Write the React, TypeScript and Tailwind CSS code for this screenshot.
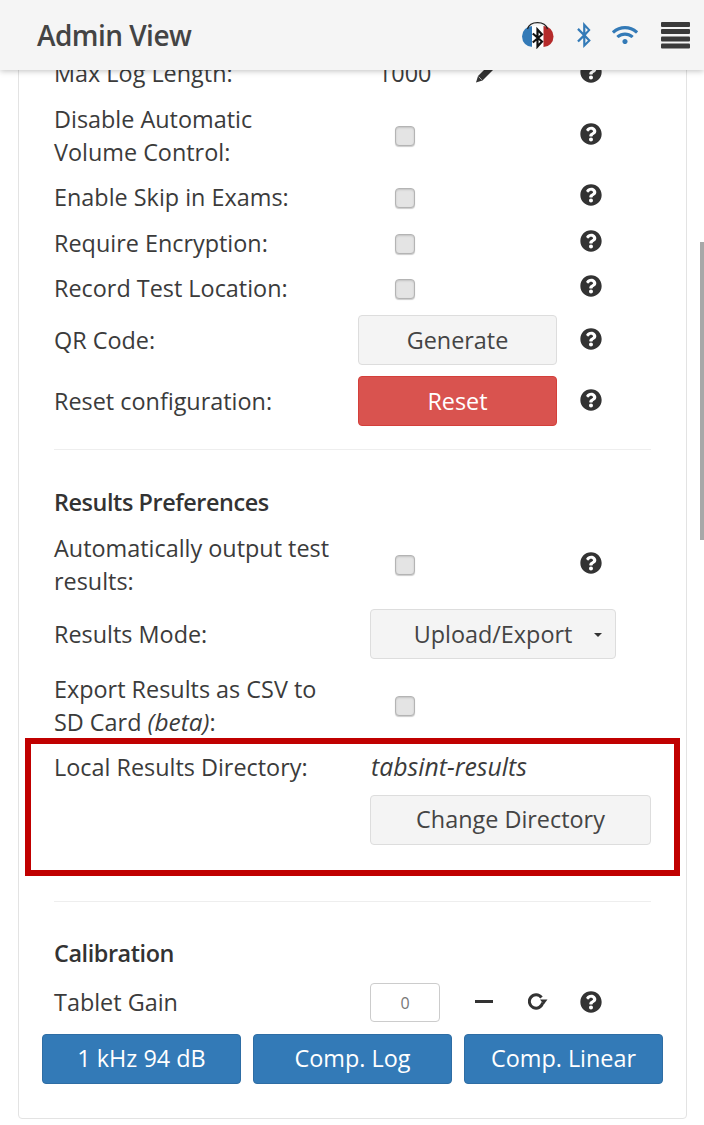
import React from "react";
import { FaQuestionCircle, FaBluetoothB, FaWifi } from "react-icons/fa";

const Help = ({ className = "" }: { className?: string }) => (
  <FaQuestionCircle className={`w-[22px] h-[22px] text-[#333333] shrink-0 ${className}`} />
);

const Check = () => (
  <div className="w-[70px] flex justify-center pt-[3px]">
    <input
      type="checkbox"
      className="appearance-none block w-[20px] h-[20px] rounded-[4px] bg-[#e4e4e4] border border-[#b4b4b4] shadow-[inset_0_1px_2px_rgba(0,0,0,0.15),0_1px_1px_rgba(0,0,0,0.2)]"
    />
  </div>
);

const CheckRow = ({
  label,
  className,
  help = true,
  two = false,
}: {
  label: React.ReactNode;
  className: string;
  help?: boolean;
  two?: boolean;
}) => (
  <div className={`flex items-center ${two ? "min-h-[67px]" : "min-h-[34px]"} ${className}`}>
    <div className={`w-[316px] pt-[1px] -mb-[1px] ${two ? "leading-[33px]" : "leading-[34px]"}`}>{label}</div>
    <div className="w-[210px]">
      <Check />
    </div>
    {help && <Help className="-mt-[2px]" />}
  </div>
);

const btn = "h-[50px] rounded-[4px] border flex items-center justify-center";
const def = "bg-[#f4f4f4] border-[#dddddd] text-[#444444]";
const blue = "flex-1 bg-[#337ab7] border-[#2e6da4] text-white";

const Logo = () => (
  <svg width="32" height="27" viewBox="0 0 32 27" className="shrink-0">
    <defs>
      <clipPath id="cloud">
        <path d="M10.5 4 A10.5 10.5 0 0 0 10.5 25 L21.5 25 A10 10.5 0 0 0 21.5 4 Z" />
      </clipPath>
    </defs>
    <g clipPath="url(#cloud)">
      <rect x="0" y="0" width="10" height="27" fill="#337ab7" />
      <rect x="10" y="0" width="11.5" height="27" fill="#ffffff" />
      <rect x="21.5" y="0" width="11" height="27" fill="#b52a2a" />
    </g>
    <path d="M5.5 7 C8 -1.5 23 -1.5 25.5 7" fill="none" stroke="#222222" strokeWidth="1.2" />
    <path d="M10.8 11.5 L20 19.5 L15.5 24.5 L15.5 7.5 L20 12.5 L10.8 20.5" fill="none" stroke="#111111" strokeWidth="2.2" />
  </svg>
);

const Bars = () => (
  <svg width="29" height="27" viewBox="0 0 29 27" className="shrink-0">
    <rect x="0" y="0" width="29" height="5" rx="1" fill="#3a3a3a" />
    <rect x="0" y="7" width="29" height="5" rx="1" fill="#3a3a3a" />
    <rect x="0" y="14.5" width="29" height="5" rx="1" fill="#3a3a3a" />
    <rect x="0" y="21.5" width="29" height="5" rx="1" fill="#3a3a3a" />
  </svg>
);

const Pencil = () => (
  <svg width="20" height="20" viewBox="0 0 20 20" className="shrink-0 -mt-[1px]">
    <path d="M1 19.5 L3 13 L14.5 1.5 L19 6 L7.5 17.5 Z" fill="#333333" />
    <path d="M3.6 13.6 L6.8 16.8" stroke="#ffffff" strokeWidth="0.6" />
  </svg>
);

const Refresh = () => (
  <svg width="20" height="18" viewBox="0 0 20 18" className="shrink-0 -mt-[2px]">
    <path d="M13.5 4.5 A6.7 6.7 0 1 0 14.7 9.5" fill="none" stroke="#333333" strokeWidth="3" />
    <path d="M12 6.5 L19.5 6.5 L15.8 11.5 Z" fill="#333333" />
  </svg>
);

export default function App() {
  return (
    <div
      className="w-[704px] h-[1125px] flex flex-col overflow-hidden bg-white text-[23.4px] text-[#3b3b3b] relative"
      style={{ fontFamily: '"Open Sans", sans-serif' }}
    >
      <header className="relative z-10 h-[70px] shrink-0 bg-[#f5f5f5] shadow-[0_1px_6px_rgba(0,0,0,0.25)] flex items-center pl-[37px] pr-[14px]">
        <div className="text-[28px] font-semibold text-[#444444] tracking-[-0.55px] flex-1">Admin View</div>
        <Logo />
        <FaBluetoothB className="w-[20px] h-[26px] text-[#337ab7] ml-[20px]" />
        <FaWifi className="w-[26px] h-[24px] text-[#337ab7] ml-[18px]" />
        <div className="ml-[23px]">
          <Bars />
        </div>
      </header>

      <div className="absolute right-0 top-[242px] w-[4.5px] h-[298px] bg-[#a8a8a8]" />

      <main className="flex-1 overflow-hidden">
        <div className="ml-[18px] w-[669px] -mt-[24px] h-[1073px] border border-[#e3e3e3] rounded-[4px] px-[35px] pt-[9px]">
          <div className="flex items-center h-[34px]">
            <div className="w-[324px] pt-[1px] -mb-[1px]">Max Log Length:</div>
            <div className="w-[97px] pt-[1px] -mb-[1px]">1000</div>
            <Pencil />
            <Help className="ml-[85px] -mt-[2px]" />
          </div>

          <CheckRow two className="mt-[11px]" label={<>Disable Automatic<br />Volume Control:</>} />
          <CheckRow className="mt-[11px]" label="Enable Skip in Exams:" />
          <CheckRow className="mt-[12px]" label="Require Encryption:" />
          <CheckRow className="mt-[11px]" label="Record Test Location:" />

          <div className="flex items-center mt-[11px]">
            <div className="w-[304px] pt-[1px] -mb-[1px]">QR Code:</div>
            <div className="w-[222px]">
              <button className={`${btn} ${def} w-[199px] pt-[2px]`}>Generate</button>
            </div>
            <Help className="-mt-[2px]" />
          </div>

          <div className="flex items-center mt-[11px]">
            <div className="w-[304px] pt-[1px] -mb-[1px]">Reset configuration:</div>
            <div className="w-[222px]">
              <button className={`${btn} w-[199px] bg-[#d9534f] border-[#d43f3a] text-white pt-[2px]`}>Reset</button>
            </div>
            <Help className="-mt-[2px]" />
          </div>

          <hr className="mt-[23px] border-t border-[#eeeeee]" />

          <h3 className="mt-[35px] font-semibold leading-[34px] tracking-[-0.42px] text-[#333333]">Results Preferences</h3>

          <CheckRow two className="mt-[11px]" label={<>Automatically output test<br />results:</>} />

          <div className="flex items-center mt-[12px]">
            <div className="w-[316px] pt-[1px] -mb-[1px]">Results Mode:</div>
            <button className={`${btn} ${def} w-[246px] relative pt-[2px]`}>
              Upload/Export
              <span className="absolute right-[13px] top-[23px] w-0 h-0 border-x-[4px] border-x-transparent border-t-[4px] border-t-[#333333]" />
            </button>
          </div>

          <CheckRow
            two
            className="mt-[12px]"
            help={false}
            label={<>Export Results as CSV to<br />SD Card <i className="text-[24.4px] leading-[1]">(beta)</i>:</>}
          />

          <div className="-mx-[29px] h-[138px] border-[6px] border-[#c00000] pl-[23px] pr-[22px] pt-[6px]">
            <div className="flex items-center h-[34px]">
              <div className="w-[317px] pt-[1px] -mb-[1px]">Local Results Directory:</div>
              <i className="text-[24.8px] text-[#3b3b3b]">tabsint-results</i>
            </div>
            <div className="pl-[316px] mt-[11px]">
              <button className={`${btn} ${def} w-[281px]`}>Change Directory</button>
            </div>
          </div>

          <hr className="mt-[25px] border-t border-[#eeeeee]" />

          <h3 className="mt-[34px] font-semibold leading-[34px] tracking-[-0.42px] text-[#333333]">Calibration</h3>

          <div className="flex items-center mt-[13px]">
            <div className="w-[316px]">Tablet Gain</div>
            <div className="w-[70px] h-[39px] rounded-[4px] border border-[#cccccc] bg-white text-[16px] text-[#777777] flex items-center justify-center">0</div>
            <div className="w-[18px] h-[3px] bg-[#333333] ml-[35px] -mt-[2px]" />
            <div className="ml-[35px]">
              <Refresh />
            </div>
            <Help className="ml-[32px] -mt-[2px]" />
          </div>

          <div className="-mx-[12px] mt-[12px] flex gap-[12px]">
            <button className={`${btn} ${blue}`}>1 kHz 94 dB</button>
            <button className={`${btn} ${blue}`}>Comp. Log</button>
            <button className={`${btn} ${blue}`}>Comp. Linear</button>
          </div>
        </div>
      </main>
    </div>
  );
}
